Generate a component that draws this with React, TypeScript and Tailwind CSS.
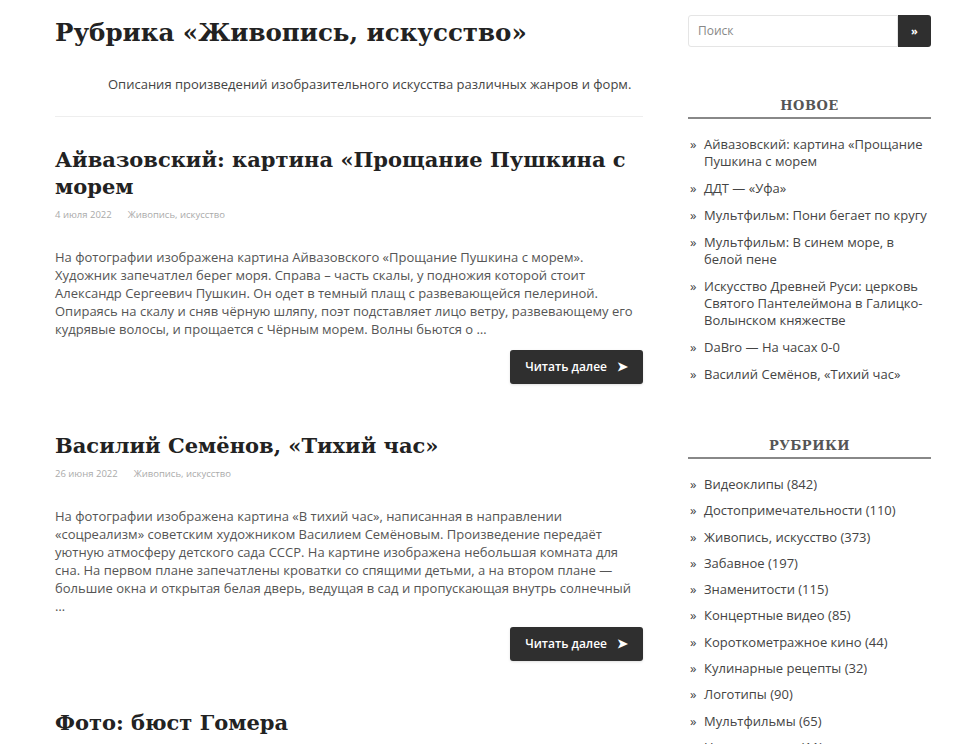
import { PropsWithChildren } from "react";

interface Post {
  id: number;
  title: string;
  date: string;
  category: string;
  text: string;
}

const posts: Post[] = [
  {
    id: 1,
    title: "Айвазовский: картина «Прощание Пушкина с морем",
    date: "4 июля 2022",
    category: "Живопись, искусство",
    text: "На фотографии изображена картина Айвазовского «Прощание Пушкина с морем». Художник запечатлел берег моря. Справа – часть скалы, у подножия которой стоит Александр Сергеевич Пушкин. Он одет в темный плащ с развевающейся пелериной. Опираясь на скалу и сняв чёрную шляпу, поэт подставляет лицо ветру, развевающему его кудрявые волосы, и прощается с Чёрным морем. Волны бьются о …",
  },
  {
    id: 2,
    title: "Василий Семёнов, «Тихий час»",
    date: "26 июня 2022",
    category: "Живопись, искусство",
    text: "На фотографии изображена картина «В тихий час», написанная в направлении «соцреализм» советским художником Василием Семёновым. Произведение передаёт уютную атмосферу детского сада СССР. На картине изображена небольшая комната для сна. На первом плане запечатлены кроватки со спящими детьми, а на втором плане — большие окна и открытая белая дверь, ведущая в сад и пропускающая внутрь солнечный …",
  },
];

const recent = [
  "Айвазовский: картина «Прощание Пушкина с морем",
  "ДДТ — «Уфа»",
  "Мультфильм: Пони бегает по кругу",
  "Мультфильм: В синем море, в белой пене",
  "Искусство Древней Руси: церковь Святого Пантелеймона в Галицко-Волынском княжестве",
  "DaBro — На часах 0-0",
  "Василий Семёнов, «Тихий час»",
];

const categories = [
  "Видеоклипы (842)",
  "Достопримечательности (110)",
  "Живопись, искусство (373)",
  "Забавное (197)",
  "Знаменитости (115)",
  "Концертные видео (85)",
  "Короткометражное кино (44)",
  "Кулинарные рецепты (32)",
  "Логотипы (90)",
  "Мультфильмы (65)",
  "Наша команда (11)",
];

const serif = "font-['DejaVu_Serif',serif]";

function Widget(props: PropsWithChildren<{ title: string }>) {
  return (
    <div>
      <h3
        className={`${serif} font-bold text-[13px] leading-[18px] text-[#555] text-center pb-[2px] border-b-2 border-[#888] tracking-[0.5px]`}
      >
        {props.title}
      </h3>
      {props.children}
    </div>
  );
}

function PostItem({ post }: { post: Post }) {
  return (
    <article className="mb-[48px]">
      <h2 className={`${serif} font-bold text-[21px] leading-[27px] text-[#222]`}>
        {post.title}
      </h2>
      <div className="mt-[8px] text-[9.5px] text-[#aaa] flex gap-[16px]">
        <span>{post.date}</span>
        <span>{post.category}</span>
      </div>
      <p className="mt-[26px] text-[13px] leading-[18px] text-[#555]">
        {post.text}
      </p>
      <div className="flex justify-end mt-[12px]">
        <button className="bg-[#2f2f2f] text-white text-[12px] font-semibold h-[34px] px-[15px] rounded-[3px] flex items-center gap-[10px] shadow-sm">
          Читать далее
          <span className="text-[13px]">➤</span>
        </button>
      </div>
    </article>
  );
}

export default function App() {
  return (
    <div className="bg-white h-[744px] overflow-hidden font-['Open_Sans',sans-serif] flex gap-[45px] pl-[55px]">
      <main className="w-[588px] shrink-0">
        <h1 className={`${serif} font-bold text-[24.5px] text-[#222] mt-[16px] leading-[34px]`}>
          Рубрика «Живопись, искусство»
        </h1>
        <p className="mt-[25px] text-[13px] text-[#444] pl-[53px]">
          Описания произведений изобразительного искусства различных жанров и форм.
        </p>
        <div className="mt-[21px] border-t border-[#eee] mb-[29px]" />
        {posts.map((p) => (
          <PostItem key={p.id} post={p} />
        ))}
        <h2 className={`${serif} font-bold text-[21px] leading-[27px] text-[#222]`}>
          Фото: бюст Гомера
        </h2>
      </main>

      <aside className="w-[243px] shrink-0 pt-[15px]">
        <div className="flex h-[32px]">
          <input
            placeholder="Поиск"
            className="flex-1 min-w-0 border border-[#e5e5e5] rounded-l-[3px] px-[9px] text-[12px] text-[#444] placeholder:text-[#888] outline-none"
          />
          <button className="w-[33px] bg-[#2f2f2f] text-white text-[11px] rounded-r-[3px] font-bold">
            »
          </button>
        </div>

        <div className="mt-[50px]">
          <Widget title="НОВОЕ">
            <ul className="mt-[17px] flex flex-col gap-[10px]">
              {recent.map((r) => (
                <li key={r} className="flex text-[13px] leading-[17px] text-[#444]">
                  <span className="w-[16px] shrink-0 pl-[2px]">»</span>
                  <span>{r}</span>
                </li>
              ))}
            </ul>
          </Widget>
        </div>

        <div className="mt-[54px]">
          <Widget title="РУБРИКИ">
            <ul className="mt-[17px] flex flex-col gap-[9.3px]">
              {categories.map((c) => (
                <li key={c} className="flex text-[13px] leading-[17px] text-[#444]">
                  <span className="w-[16px] shrink-0 pl-[2px]">»</span>
                  <span>{c}</span>
                </li>
              ))}
            </ul>
          </Widget>
        </div>
      </aside>
    </div>
  );
}
